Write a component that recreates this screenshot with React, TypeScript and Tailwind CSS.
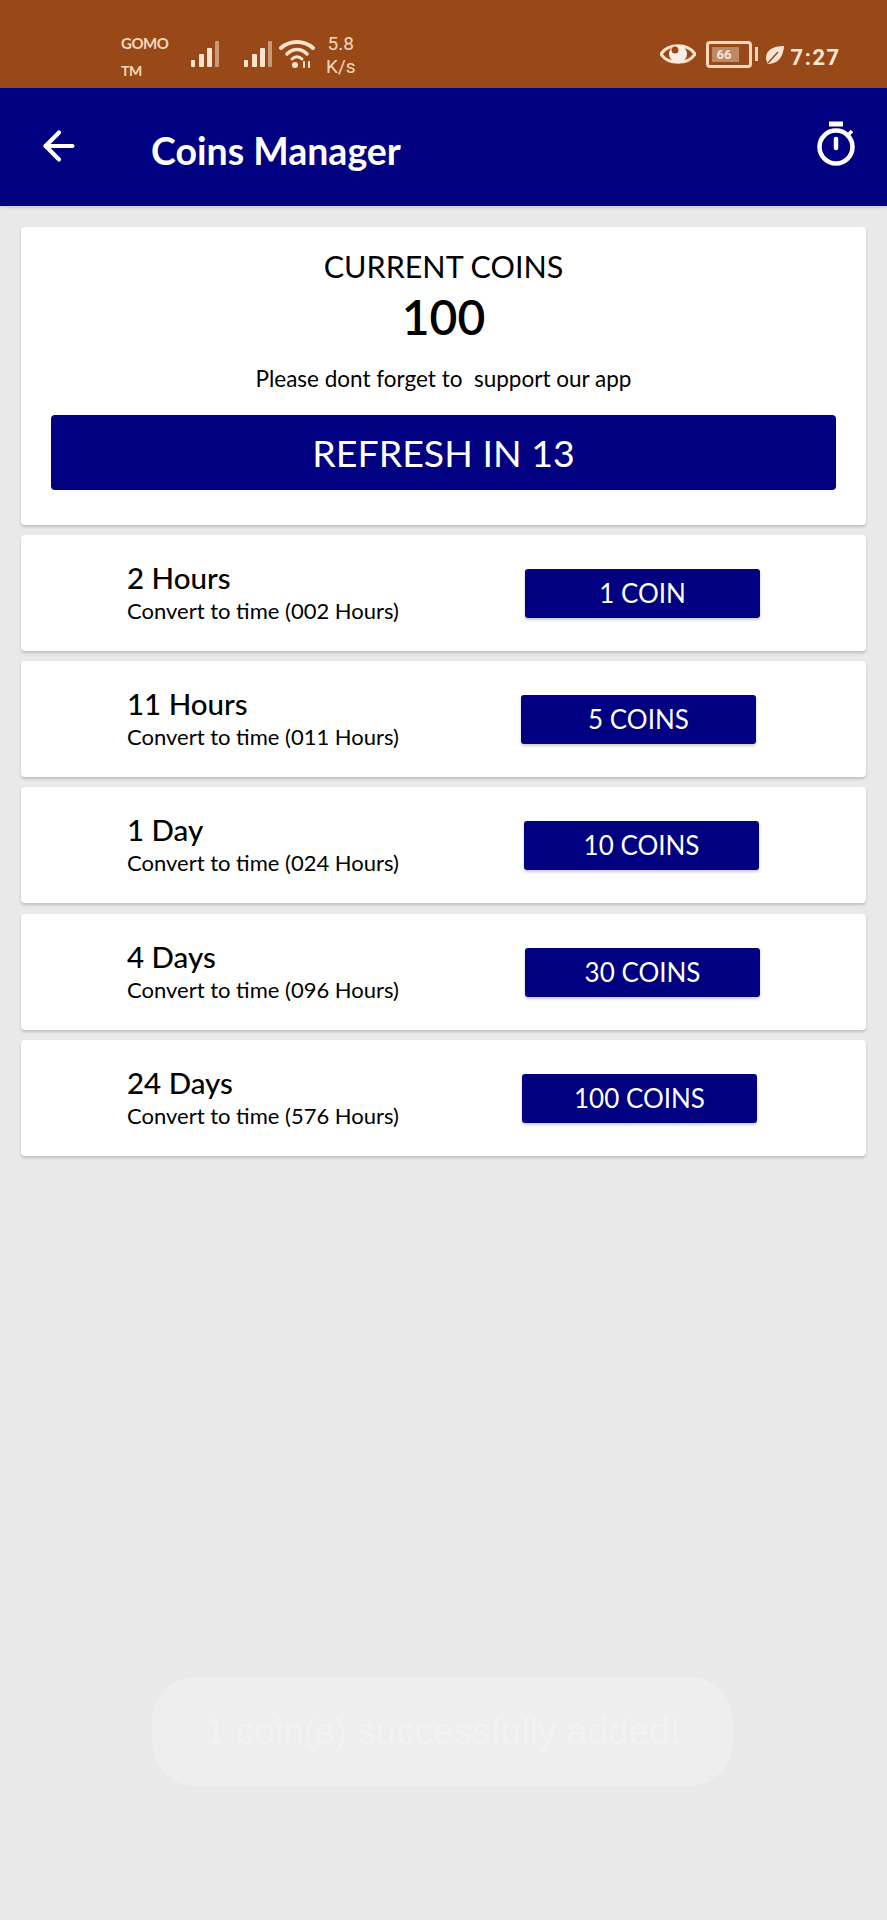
import { ArrowLeft } from 'lucide-react';

const plans = [
  { title: '2 Hours', desc: 'Convert to time (002 Hours)', coins: '1 COIN', row: '', btn: 'ml-[398px]' },
  { title: '11 Hours', desc: 'Convert to time (011 Hours)', coins: '5 COINS', row: '', btn: 'ml-[394px]' },
  { title: '1 Day', desc: 'Convert to time (024 Hours)', coins: '10 COINS', row: '', btn: 'ml-[397px]' },
  { title: '4 Days', desc: 'Convert to time (096 Hours)', coins: '30 COINS', row: 'mt-[1px]', btn: 'ml-[398px]' },
  { title: '24 Days', desc: 'Convert to time (576 Hours)', coins: '100 COINS', row: '', btn: 'ml-[395px]' },
];

function SignalBars() {
  return (
    <svg width="32" height="28" viewBox="0 0 32 28">
      <rect x="1" y="20" width="4" height="7" rx="1" fill="#fbe3cd" />
      <rect x="9" y="14" width="5" height="13" rx="1" fill="#fbe3cd" />
      <rect x="17" y="8" width="5" height="19" rx="1" fill="#fbe3cd" />
      <rect x="25" y="1" width="4" height="26" rx="1" fill="#c99a78" />
    </svg>
  );
}

function StatusBar() {
  return (
    <div className="h-[88px] bg-[#994917] flex items-start relative text-[#f6d8bd] font-['Roboto',sans-serif]">
      <div className="ml-[121px] mt-[36px] w-[52px] flex flex-col gap-[12px] text-[15px] leading-[15px] font-['Lato',sans-serif] font-bold">
        <span className="tracking-[-0.5px]">GOMO</span>
        <span className="text-[14px] tracking-[-0.5px]">TM</span>
      </div>
      <div className="ml-[17px] mt-[40px]">
        <SignalBars />
      </div>
      <div className="ml-[21px] mt-[40px]">
        <SignalBars />
      </div>
      <svg className="ml-[4px] mt-[39px]" width="36" height="30" viewBox="0 0 36 30" fill="none" stroke="#fbe3cd" strokeLinecap="round">
        <path d="M2 9 C11 1 25 1 34 9" strokeWidth="4" />
        <path d="M8 15 C14 9 22 9 28 15" strokeWidth="3.5" />
        <path d="M13 20 C16 17 20 17 23 20" strokeWidth="3" />
        <circle cx="16" cy="26" r="3" fill="#fbe3cd" stroke="none" />
        <path d="M25 23v5M30 23v5" strokeWidth="2" />
      </svg>
      <div className="ml-[11px] mt-[32px] flex flex-col items-center text-[19px] leading-[23px] font-normal">
        <span>5.8</span>
        <span>K/s</span>
      </div>
      <svg className="ml-[304px] mt-[41px]" width="36" height="26" viewBox="0 0 36 26">
        <path d="M1 13 C8 2 28 2 35 13 C28 24 8 24 1 13 Z" fill="#994917" stroke="#fbe3cd" strokeWidth="3" />
        <circle cx="18" cy="13" r="9" fill="#f7eee8" />
        <circle cx="15" cy="9" r="3.5" fill="#994917" />
      </svg>
      <div className="ml-[10px] mt-[41px] w-[46px] h-[27px] rounded-[4px] border-[3px] border-[#f6d8bd] flex items-center relative overflow-hidden">
        <div className="absolute left-[3px] top-[3px] bottom-[3px] w-[27px] bg-[#bd8a66]" />
        <span className="relative ml-[8px] text-[13px] leading-none font-bold text-[#f6e6d8]">66</span>
      </div>
      <div className="ml-[3px] mt-[47px] w-[3px] h-[14px] bg-[#f6d8bd]" />
      <svg className="ml-[7px] mt-[45px]" width="20" height="20" viewBox="0 0 20 20">
        <path d="M19 1 C8 1 1 5 1 13 C1 15 2 17 3 19 C9 19 18 16 19 1 Z" fill="#f7e6d8" />
        <path d="M3 18 L13 7" stroke="#994917" strokeWidth="1.5" />
      </svg>
      <span className="ml-[6px] mt-[46px] text-[22px] leading-[24px] font-bold tracking-[1.5px] text-[#f9e8da]">7:27</span>
    </div>
  );
}

function Header() {
  return (
    <div className="h-[118px] bg-[#000080] flex items-center text-white shadow-[0_2px_3px_rgba(0,0,0,0.12)] relative">
      <ArrowLeft className="ml-[36px] mb-[2px]" size={46} strokeWidth={2.2} />
      <h1 className="ml-[69px] mt-[8px] text-[37.5px] leading-none font-bold font-['Lato',sans-serif]">Coins Manager</h1>
      <svg className="ml-auto mr-[30px] mb-[6px]" width="42" height="46" viewBox="0 0 42 46" fill="none" stroke="white" strokeWidth="4.5">
        <path d="M14 3h14" strokeWidth="5" />
        <circle cx="21" cy="26" r="16.5" />
        <path d="M21 18v9" strokeLinecap="round" />
        <path d="M34 13l3-3" strokeWidth="3.5" />
      </svg>
    </div>
  );
}

export default function App() {
  return (
    <div className="relative h-[1920px] bg-[#e9e9e9] font-['Lato',sans-serif] text-black overflow-hidden">
      <StatusBar />
      <Header />

      <div className="px-[21px] pt-[21px] flex flex-col gap-[10px]">
        {/* Current coins */}
        <div className="h-[298px] bg-white rounded-[4px] shadow-[0_2px_3px_rgba(0,0,0,0.18)] px-[30px] flex flex-col items-center">
          <div className="mt-[21px] text-[30.5px] leading-[36px]">CURRENT COINS</div>
          <div className="mt-[3px] text-[48px] leading-[60px] font-semibold">100</div>
          <div className="mt-[18px] text-[22.5px] leading-[28px]">Please dont forget to&nbsp; support our app</div>
          <button className="mt-[22px] w-full h-[75px] bg-[#000080] rounded-[4px] text-white text-[37.5px] leading-none">REFRESH IN 13</button>
        </div>

        {/* Convert options */}
        {plans.map((p) => (
          <div key={p.title} className={`${p.row} h-[116px] bg-white rounded-[4px] shadow-[0_2px_3px_rgba(0,0,0,0.18)] pl-[106px] flex items-center relative`}>
            <div className="w-0 whitespace-nowrap">
              <div className="text-[29.5px] leading-[36px] font-medium -mt-[2px]">{p.title}</div>
              <div className="text-[22px] leading-[26px] mt-[2px]">{p.desc}</div>
            </div>
            <button className={`${p.btn} w-[235px] h-[49px] bg-[#000080] rounded-[3px] text-white text-[26px] leading-none shadow-[0_2px_3px_rgba(0,0,0,0.2)]`}>{p.coins}</button>
          </div>
        ))}
      </div>

      {/* Fading toast */}
      <div className="absolute left-[152px] top-[1677px] w-[581px] h-[109px] rounded-[44px] bg-[#eeeeee] flex items-center justify-center text-[37px] text-[#f2f2f2] font-['Liberation_Sans',sans-serif]">
        1 coin(s) successfully added!
      </div>
    </div>
  );
}
